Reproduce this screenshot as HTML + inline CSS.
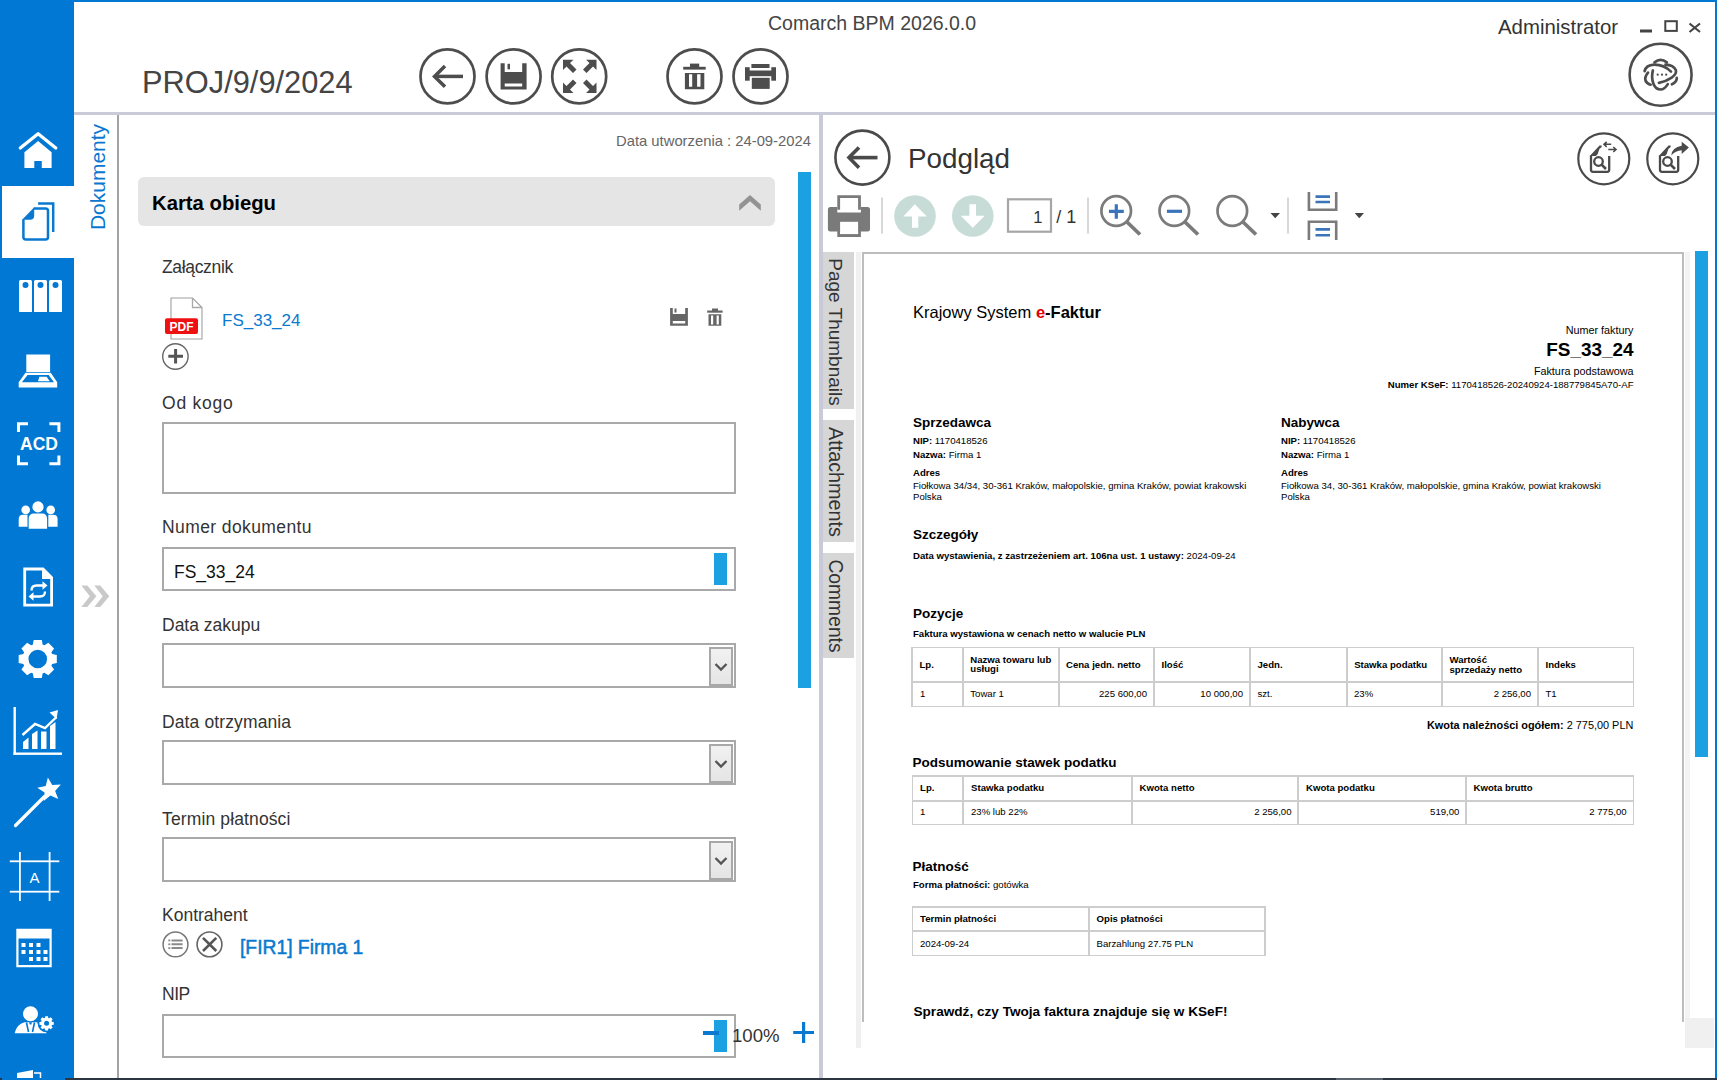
<!DOCTYPE html>
<html><head><meta charset="utf-8">
<style>
*{margin:0;padding:0;box-sizing:border-box}
html,body{width:1717px;height:1080px;overflow:hidden;background:#fff;font-family:"Liberation Sans",sans-serif;}
.a{position:absolute}
.t{position:absolute;white-space:nowrap;line-height:1}
svg{position:absolute;overflow:visible}
</style></head><body>
<!-- window frame -->
<div class="a" style="left:0;top:0;width:1717px;height:2px;background:#0078d4"></div>
<div class="a" style="left:1715px;top:0;width:2px;height:1080px;background:#0078d4"></div>
<div class="a" style="left:0;top:1078px;width:1717px;height:2px;background:#2b3640"></div>
<div class="a" style="left:1336px;top:1078px;width:47px;height:2px;background:#59636b"></div>
<!-- sidebar -->
<div class="a" style="left:2px;top:0;width:72px;height:1080px;background:#0078d4"></div><div class="a" style="left:0;top:0;width:2px;height:1078px;background:#0078d4"></div>
<div class="a" style="left:65px;top:1078px;width:9px;height:2px;background:#2b3640"></div>
<div class="a" style="left:2px;top:186px;width:72px;height:72px;background:#fff"></div>

<svg style="left:0;top:0" width="74" height="1078">
 <g fill="#fff">
  <!-- home -->
  <path d="M20.3 148 L38.1 133.8 L55.8 148" fill="none" stroke="#fff" stroke-width="3.3" stroke-linecap="round" stroke-linejoin="round"/>
  <path d="M24.4 152.2 L38.1 141 L51.6 152.2 V168 H41.8 V160.9 H34.3 V168 H24.4 Z"/>
  <!-- binders -->
  <path fill-rule="evenodd" d="M19 281.5 Q19 280 20.5 280 H30.5 Q32 280 32 281.5 V312 H19 Z M25.5 285 m-3 0 a3 3 0 1 0 6 0 a3 3 0 1 0 -6 0"/>
  <path fill-rule="evenodd" d="M34 281.5 Q34 280 35.5 280 H45.5 Q47 280 47 281.5 V312 H34 Z M40.5 285 m-3 0 a3 3 0 1 0 6 0 a3 3 0 1 0 -6 0"/>
  <path fill-rule="evenodd" d="M49 281.5 Q49 280 50.5 280 H60.5 Q62 280 62 281.5 V312 H49 Z M55.5 285 m-3 0 a3 3 0 1 0 6 0 a3 3 0 1 0 -6 0"/>
  <!-- laptop/scanner -->
  <rect x="26.3" y="354.5" width="23.8" height="17.5"/>
  <path fill-rule="evenodd" d="M25.5 372.8 H50.8 L57.2 382.3 V387.6 H18.7 V382.3 Z M27.6 375 L21.9 382.3 H54 L48.6 375 Z"/>
  <path d="M39.4 376.7 H46.6 L49.8 381.2 H38 Z"/>
  <!-- ACD -->
  <path d="M17 422.3 H28 V425.3 H20 V432 H17 Z M60.4 422.3 H49.4 V425.3 H57.4 V432 H60.4 Z M17 465.3 H28 V462.3 H20 V455.5 H17 Z M60.4 465.3 H49.4 V462.3 H57.4 V455.5 H60.4 Z"/>
 </g>
 <text x="39" y="450.3" fill="#fff" font-family="Liberation Sans" font-weight="bold" font-size="17.5" text-anchor="middle">ACD</text>
 <g fill="#fff">
  <!-- people -->
  <circle cx="38" cy="506.9" r="5.6"/>
  <path d="M28.7 528.8 V519 Q28.7 513.5 34 513.5 H42 Q47.1 513.5 47.1 519 V528.8 Z"/>
  <circle cx="25.7" cy="509.9" r="4.3"/>
  <circle cx="50.7" cy="509.9" r="4.3"/>
  <path d="M18.7 526.7 V519 Q18.7 514.7 23 514.7 H27.5 V526.7 Z"/>
  <path d="M57.6 526.7 V519 Q57.6 514.7 53.3 514.7 H48.3 V526.7 Z"/>
 </g>
 <!-- doc sync -->
 <g fill="none" stroke="#fff" stroke-width="2.8">
  <path d="M24.7 569 H43 L51.6 577.5 V605.2 H24.7 Z"/>
  <path d="M42.5 569 V577.5 H51.6" stroke-width="0" />
 </g>
 <path d="M42 568 L53 579 H42 Z" fill="#fff"/>
 <g fill="none" stroke="#fff" stroke-width="2.3">
  <path d="M31.5 590.5 Q31.5 585.5 36.5 585.5 H43"/>
  <path d="M45 591.5 Q45 596.5 40 596.5 H33"/>
 </g>
 <path d="M42.5 581.3 L47.5 585.5 L42.5 589.7 Z M33.5 592.3 L28.5 596.5 L33.5 600.7 Z" fill="#fff"/>
 <!-- gear -->
 <g fill="#fff" fill-rule="evenodd">
  <path d="M32.80 644.63 L33.70 639.93 L41.80 639.93 L42.70 644.63 L44.41 645.34 L48.37 642.65 L54.10 648.38 L51.41 652.34 L52.12 654.05 L56.82 654.95 L56.82 663.05 L52.12 663.95 L51.41 665.66 L54.10 669.62 L48.37 675.35 L44.41 672.66 L42.70 673.37 L41.80 678.07 L33.70 678.07 L32.80 673.37 L31.09 672.66 L27.13 675.35 L21.40 669.62 L24.09 665.66 L23.38 663.95 L18.68 663.05 L18.68 654.95 L23.38 654.05 L24.09 652.34 L21.40 648.38 L27.13 642.65 L31.09 645.34 Z M28.45 659 a9.3 9.3 0 1 0 18.6 0 a9.3 9.3 0 1 0 -18.6 0 Z"/>
 </g>
 <!-- chart -->
 <g fill="#fff">
  <rect x="13.5" y="707" width="2.4" height="48"/>
  <rect x="13.5" y="752.5" width="48.5" height="2.4"/>
  <path d="M23 742 L28.5 737.5 V748.9 H23 Z"/>
  <path d="M32 734 L37.5 730.5 V748.9 H32 Z"/>
  <path d="M41 731.5 H46.5 V748.9 H41 Z"/>
  <path d="M50 726 L55.5 722 V748.9 H50 Z"/>
 </g>
 <g fill="none" stroke="#fff" stroke-width="2.4"><path d="M22.5 735 L35 724 L45 728 L56.5 717"/></g>
 <path d="M49.5 712.5 L58 710 L56.5 719 Z" fill="#fff"/>
 <!-- wand -->
 <path d="M15.5 825.5 L44.5 796.5" stroke="#fff" stroke-width="3.2" stroke-linecap="round"/>
 <path fill="#fff" d="M47.86 777.62 L52.23 785.06 L60.83 784.52 L55.11 790.97 L58.28 798.99 L50.38 795.55 L43.73 801.04 L44.57 792.45 L37.29 787.83 L45.71 785.97 Z"/>
 <!-- frame A -->
 <g fill="#fff">
  <rect x="19" y="852" width="1.8" height="49"/>
  <rect x="48.7" y="852" width="1.8" height="49"/>
  <rect x="9.8" y="860.4" width="49.5" height="1.8"/>
  <rect x="9.8" y="890.8" width="49.5" height="1.8"/>
 </g>
 <text x="34.5" y="883" fill="#fff" font-family="Liberation Sans" font-size="15" text-anchor="middle">A</text>
 <!-- calendar -->
 <g fill="#fff">
  <path fill-rule="evenodd" d="M16.3 928.7 H51.7 V967.2 H16.3 Z M18.5 938.5 V965 H49.5 V938.5 Z"/>
  <rect x="21.5" y="943" width="4" height="4"/><rect x="29" y="943" width="4" height="4"/><rect x="36.5" y="943" width="4" height="4"/>
  <rect x="21.5" y="950" width="4" height="4"/><rect x="29" y="950" width="4" height="4"/><rect x="36.5" y="950" width="4" height="4"/><rect x="43.5" y="950" width="4" height="4"/>
  <rect x="29" y="957" width="4" height="4"/><rect x="36.5" y="957" width="4" height="4"/><rect x="43.5" y="957" width="4" height="4"/>
 </g>
 <!-- user gear -->
 <g fill="#fff">
  <circle cx="30.5" cy="1013.7" r="7.5"/>
  <path d="M14.6 1033.3 Q16.5 1024.5 24.5 1022.3 H36.5 Q44 1024 46.6 1033.3 Z"/>
 </g>
 <g stroke="#0078d4" stroke-width="1.6" fill="none"><path d="M26.5 1022.5 L28.5 1032 M34.5 1022.5 L32.5 1032"/></g>
 <path d="M29 1022.3 H32 L31.3 1024.5 H29.7 Z" fill="#0078d4"/>
 <circle cx="46.6" cy="1023.3" r="9" fill="#0078d4"/>
 <path fill="#fff" fill-rule="evenodd" d="M51.96 1021.66 L53.77 1021.91 L53.77 1024.69 L51.96 1024.94 L51.54 1025.93 L52.65 1027.38 L50.68 1029.35 L49.23 1028.24 L48.24 1028.66 L47.99 1030.47 L45.21 1030.47 L44.96 1028.66 L43.97 1028.24 L42.52 1029.35 L40.55 1027.38 L41.66 1025.93 L41.24 1024.94 L39.43 1024.69 L39.43 1021.91 L41.24 1021.66 L41.66 1020.67 L40.55 1019.22 L42.52 1017.25 L43.97 1018.36 L44.96 1017.94 L45.21 1016.13 L47.99 1016.13 L48.24 1017.94 L49.23 1018.36 L50.68 1017.25 L52.65 1019.22 L51.54 1020.67 Z M44.10 1023.3 a2.5 2.5 0 1 0 5.0 0 a2.5 2.5 0 1 0 -5.0 0 Z"/>
 <!-- partial bottom icon -->
 <path fill="#fff" d="M17 1073 L33 1070 V1078 H17 Z"/>
 <path fill="none" stroke="#fff" stroke-width="1.5" d="M34 1073 H40.5 V1078"/>
</svg>
<!-- selected docs icon -->
<svg style="left:0;top:0" width="74" height="260">
 <g fill="none" stroke="#0a78d0" stroke-width="2.5">
  <path d="M33.7 208.5 H45.5 Q48 208.5 48 211 V236.9 Q48 239.4 45.5 239.4 H25.9 Q23.4 239.4 23.4 236.9 V219.3"/>
  <path d="M38.1 203.6 H53.2 V232"/>
 </g>
 <path d="M22.1 219.8 L34.2 207.2 V215.5 Q34.2 219.8 30 219.8 Z" fill="#0a78d0"/>
</svg>
<!-- chevrons -->
<svg style="left:0;top:0" width="120" height="620">
 <g fill="#c9c9c9">
  <path d="M81.4 585.6 H87.3 L96.4 596.3 L87.3 607 H81.4 L89.8 596.3 Z"/>
  <path d="M94.3 585.6 H100.2 L109.3 596.3 L100.2 607 H94.3 L102.7 596.3 Z"/>
 </g>
</svg>


<!-- header -->
<div class="a" style="left:74px;top:112px;width:1641px;height:3px;background:#c9cbd9"></div>

<div class="t" style="left:142px;top:68.1px;font-size:30.8px;color:#444">PROJ/9/9/2024</div>
<div class="t" style="left:768px;top:13.5px;font-size:19.5px;color:#444">Comarch BPM 2026.0.0</div>
<div class="t" style="left:1498px;top:16.5px;font-size:20.4px;color:#333">Administrator</div>
<svg style="left:0;top:0" width="1717" height="112">
 <g fill="none" stroke="#4d4d4d" stroke-width="2.7">
  <circle cx="447.5" cy="76.4" r="27"/>
  <circle cx="513.6" cy="76.4" r="27"/>
  <circle cx="579.2" cy="76.4" r="27"/>
  <circle cx="694.5" cy="76.4" r="27"/>
  <circle cx="760.5" cy="76.4" r="27"/>
  <circle cx="1660.6" cy="74.7" r="31" stroke-width="2.6"/>
 </g>
 <!-- back arrow -->
 <g fill="none" stroke="#4d4d4d" stroke-width="3.5">
  <path d="M463 76.4 H435"/>
  <path d="M445 66 L434.5 76.4 L445 86.8"/>
 </g>
 <!-- save -->
 <path fill="#4d4d4d" fill-rule="evenodd" d="M500.6 63.2 H526.6 V89.4 H500.6 Z M504.7 63.2 V72 H522.2 V63.2 Z M504.7 83.6 V86.5 H522.2 V83.6 Z"/>
 <rect x="507.5" y="63.8" width="2.5" height="5.5" fill="#4d4d4d"/>
 <!-- expand -->
 <g fill="#4d4d4d">
  <path d="M563 59.7 H573.5 L570 63 L576.5 69.5 L573 73 L566.5 66.5 L563 70 Z"/>
  <path d="M596.5 59.7 V70 L593 66.5 L586.5 73 L583 69.5 L589.5 63 L586 59.7 Z"/>
  <path d="M563 92.9 V82.5 L566.5 86 L573 79.5 L576.5 83 L570 89.5 L573.5 92.9 Z"/>
  <path d="M596.5 92.9 H586 L589.5 89.5 L583 83 L586.5 79.5 L593 86 L596.5 82.5 Z"/>
 </g>
 <!-- trash -->
 <g fill="#4d4d4d">
  <rect x="690" y="63.6" width="9.2" height="3.4"/>
  <rect x="683.2" y="66.8" width="22.5" height="2.8"/>
  <path fill-rule="evenodd" d="M684.9 73 H704.3 V89.3 H684.9 Z M689 74.2 V86.8 H692.2 V74.2 Z M697.1 74.2 V86.8 H700.5 V74.2 Z"/>
 </g>
 <!-- printer -->
 <g fill="#4d4d4d">
  <rect x="751.4" y="64" width="18.1" height="4"/>
  <rect x="745" y="67.2" width="4.7" height="13.5"/>
  <rect x="771.3" y="67.2" width="4.7" height="13.5"/>
  <rect x="749" y="70.5" width="23" height="5.7"/>
  <rect x="751.8" y="77.8" width="17.9" height="11.1"/>
 </g>
 <!-- window controls -->
 <g fill="none" stroke="#444" stroke-width="2">
  <path d="M1640 31 H1652" stroke-width="3"/>
  <rect x="1665.3" y="21.2" width="11.5" height="9.7"/>
  <path d="M1689.5 23.5 L1700 32 M1700 23.5 L1689.5 32" stroke-width="2.2"/>
 </g>
 <!-- comarch logo -->
 <g fill="none" stroke="#4d4d4d" stroke-width="2.7" stroke-linecap="round">
  <path d="M1654.5 62.4 Q1660.6 57.5 1666.8 62.4"/>
  <path d="M1644.6 71.1 Q1646 65 1654.2 64.6 Q1664 64.5 1671 71.6"/>
  <path d="M1665.5 64.6 Q1673.5 65 1675.8 70 Q1677 74 1671.7 77.6 Q1666 81.5 1658.9 82.8"/>
  <path d="M1652.9 70.5 Q1651 77 1653.5 84.1 Q1656 89.5 1660.6 89.5 Q1664.5 89.5 1667.8 84.1"/>
  <path d="M1648 72.6 Q1644.5 77 1645.5 80.5 Q1646.5 83.5 1650.6 84.7"/>
  <path d="M1676.8 77.8 Q1677 82 1671.9 84.3"/>
 </g>
 <g fill="#4d4d4d"><circle cx="1657.7" cy="74.7" r="1.1"/><circle cx="1662" cy="74.7" r="1.1"/><circle cx="1666.2" cy="74.7" r="1.1"/></g>
</svg>


<!-- left panel -->
<div class="a" style="left:117px;top:115px;width:2px;height:963px;background:#a3a3a3"></div>
<div class="t" style="left:97px;top:176.5px;font-size:21px;color:#0a78d0;transform:translate(-50%,-50%) rotate(-90deg);transform-origin:center">Dokumenty</div>
<div class="t" style="left:616px;top:134.2px;font-size:14.8px;color:#666;">Data utworzenia : 24-09-2024</div>
<div class="a" style="left:138px;top:177px;width:637px;height:49px;border-radius:6px;background:#e5e5e5"></div>
<div class="t" style="left:152px;top:193.0px;font-size:20.3px;color:#000;font-weight:bold">Karta obiegu</div>
<svg style="left:0;top:0" width="800" height="300"><path d="M739.2 204.6 L750 195 L760.8 204.6 V210.8 L750 201.3 L739.2 210.8 Z" fill="#939393"/></svg>
<div class="t" style="left:162px;top:258.9px;font-size:17.5px;color:#333;letter-spacing:-0.34px">Załącznik</div>
<svg style="left:0;top:0" width="800" height="400">
 <path d="M171 298 H192.5 L202 307.5 V339 H171 Z" fill="#fff" stroke="#a0a0a0" stroke-width="1.1"/>
 <path d="M192.5 298 V307.5 H202" fill="none" stroke="#a8a8a8" stroke-width="1.3"/>
 <rect x="165" y="318.3" width="33" height="15.7" rx="2" fill="#ee1111"/>
 <text x="181.5" y="331" fill="#fff" font-family="Liberation Sans" font-weight="bold" font-size="12" text-anchor="middle">PDF</text>
 <circle cx="175.4" cy="356.5" r="12.7" fill="none" stroke="#666" stroke-width="1.4"/>
 <path d="M168.3 356.3 H183 M175.6 349 V363.6" stroke="#555" stroke-width="3"/>
 <g fill="#666">
  <path fill-rule="evenodd" d="M670.1 308 H687.9 V325.8 H670.1 Z M672.8 308 V314 H685.2 V308 Z M672.8 321 V323.5 H685.2 V321 Z"/>
  <rect x="674.5" y="308.5" width="2" height="4"/>
  <rect x="712" y="308.5" width="6" height="2.5"/>
  <rect x="707.2" y="310.5" width="15.4" height="2.2"/>
  <path fill-rule="evenodd" d="M708.5 314.3 H721.3 V325.8 H708.5 Z M711 315.5 V324.5 H713.2 V315.5 Z M716.6 315.5 V324.5 H718.8 V315.5 Z"/>
 </g>
</svg>
<div class="t" style="left:222px;top:311.5px;font-size:17px;color:#0a7ad0;">FS_33_24</div>
<div class="t" style="left:162px;top:395.1px;font-size:17.5px;color:#333;letter-spacing:0.78px">Od kogo</div>
<div class="a" style="left:162px;top:422px;width:574px;height:72px;border:2px solid #a9a9a9"></div>
<div class="t" style="left:162px;top:519.2px;font-size:17.5px;color:#333;letter-spacing:0.4px">Numer dokumentu</div>
<div class="a" style="left:162px;top:547px;width:574px;height:44px;border:2px solid #a9a9a9"></div>
<div class="t" style="left:174px;top:563.8px;font-size:17.5px;color:#111;">FS_33_24</div>
<div class="a" style="left:714px;top:553px;width:13px;height:31.5px;background:#1ba1e2"></div>
<div class="t" style="left:162px;top:617.2px;font-size:17.5px;color:#333;">Data zakupu</div>
<div class="a" style="left:162px;top:643px;width:574px;height:45px;border:2px solid #a9a9a9"></div>
<div class="a" style="left:709px;top:647.0px;width:24px;height:39.5px;background:linear-gradient(#f1f1f1,#e5e5e5);border:2px solid #a8a8a8;border-bottom:3px solid #a8a8a8"></div>
<svg style="left:0;top:0" width="740" height="1080"><path d="M715.5 664.0 L721 669.5 L726.5 664.0" fill="none" stroke="#555" stroke-width="2.3"/></svg>
<div class="t" style="left:162px;top:713.7px;font-size:17.5px;color:#333;letter-spacing:0.12px">Data otrzymania</div>
<div class="a" style="left:162px;top:740px;width:574px;height:45px;border:2px solid #a9a9a9"></div>
<div class="a" style="left:709px;top:744.0px;width:24px;height:39.5px;background:linear-gradient(#f1f1f1,#e5e5e5);border:2px solid #a8a8a8;border-bottom:3px solid #a8a8a8"></div>
<svg style="left:0;top:0" width="740" height="1080"><path d="M715.5 761.0 L721 766.5 L726.5 761.0" fill="none" stroke="#555" stroke-width="2.3"/></svg>
<div class="t" style="left:162px;top:810.8px;font-size:17.5px;color:#333;letter-spacing:0.13px">Termin płatności</div>
<div class="a" style="left:162px;top:837px;width:574px;height:45px;border:2px solid #a9a9a9"></div>
<div class="a" style="left:709px;top:841.0px;width:24px;height:39.5px;background:linear-gradient(#f1f1f1,#e5e5e5);border:2px solid #a8a8a8;border-bottom:3px solid #a8a8a8"></div>
<svg style="left:0;top:0" width="740" height="1080"><path d="M715.5 858.0 L721 863.5 L726.5 858.0" fill="none" stroke="#555" stroke-width="2.3"/></svg>
<div class="t" style="left:162px;top:907.4px;font-size:17.5px;color:#333;">Kontrahent</div>
<svg style="left:0;top:0" width="800" height="1080">
 <circle cx="175.5" cy="944.4" r="12.4" fill="none" stroke="#777" stroke-width="1.5"/>
 <g stroke="#8a8a8a" stroke-width="2"><path d="M171.5 940.4 H182.6 M171.5 944.3 H182.6 M171.5 948.1 H182.6"/></g>
 <g fill="#8a8a8a"><rect x="168.3" y="939.5" width="2" height="1.8"/><rect x="168.3" y="943.4" width="2" height="1.8"/><rect x="168.3" y="947.2" width="2" height="1.8"/></g>
 <circle cx="209.5" cy="944.4" r="12.4" fill="none" stroke="#666" stroke-width="1.6"/>
 <path d="M203 937.8 L216.3 951 M216.3 937.8 L203 951" stroke="#555" stroke-width="2.6"/>
</svg>
<div class="t" style="left:240px;top:938.1px;font-size:19.3px;color:#0a7ad0;-webkit-text-stroke:0.5px #0a7ad0">[FIR1] Firma 1</div>
<div class="t" style="left:162px;top:986.1px;font-size:17.5px;color:#333;letter-spacing:-0.5px">NIP</div>
<div class="a" style="left:162px;top:1014px;width:574px;height:44px;border:2px solid #a9a9a9"></div>
<div class="a" style="left:714px;top:1020px;width:13px;height:31.5px;background:#1ba1e2"></div>
<div class="a" style="left:703px;top:1031.3px;width:16.2px;height:3.3px;background:#0a78d0"></div>
<div class="t" style="left:732px;top:1026.7px;font-size:18.6px;color:#333;">100%</div>
<svg style="left:0;top:0" width="830" height="1080"><path d="M793.2 1032.5 H814 M803.6 1022 V1043" stroke="#0a78d0" stroke-width="3.2"/></svg>
<div class="a" style="left:798px;top:172px;width:13px;height:516px;background:#1ba1e2"></div>


<!-- divider -->
<div class="a" style="left:819px;top:115px;width:4px;height:963px;background:#c9cad9"></div>
<div class="t" style="left:908px;top:144.9px;font-size:27.8px;color:#333;">Podgląd</div>
<svg style="left:0;top:0" width="1717" height="260">
 <g fill="none" stroke="#4a4a4a" stroke-width="2.6">
  <circle cx="862.4" cy="157.6" r="27"/>
  <circle cx="1603.8" cy="158.8" r="25.5" stroke-width="2.2"/>
  <circle cx="1672.8" cy="158.8" r="25.5" stroke-width="2.2"/>
 </g>
 <g fill="none" stroke="#4a4a4a" stroke-width="3.6">
  <path d="M877.5 157.6 H849"/>
  <path d="M859 147.5 L849 157.6 L859 167.7"/>
 </g>
 <!-- printer gray -->
 <g fill="#7a7a7a" fill-rule="evenodd">
  <path d="M837.3 195.2 H860.9 V209.8 H858.1 V198 H840.1 V209.8 H837.3 Z"/>
  <path d="M830.4 207 H837.3 V212.5 H860.9 V207 H867.5 Q870 207 870 209.5 V228.9 Q870 231.4 867.5 231.4 H830.4 Q827.9 231.4 827.9 228.9 V209.5 Q827.9 207 830.4 207 Z"/>
  <path d="M837.3 218.8 H860.9 V236.9 H837.3 Z M840.1 221.8 V234.1 H858.1 V221.8 Z"/>
 </g>
 <rect x="840.1" y="221.8" width="18" height="12.3" fill="#fff"/>
 <g fill="#d8d8d8">
  <rect x="881" y="197.6" width="2" height="36"/>
  <rect x="1087" y="197.6" width="2" height="36"/>
  <rect x="1287" y="197.6" width="2" height="36"/>
 </g>
 <!-- up/down -->
 <circle cx="915" cy="216" r="20.8" fill="#c7dcd6"/>
 <circle cx="972.8" cy="216" r="20.8" fill="#c7dcd6"/>
 <path fill="#fff" d="M914.8 204.2 L926.9 216.4 H918.3 V227.8 H912 V216.4 H903.3 Z"/>
 <path fill="#fff" d="M972.8 227.8 L960.7 215.7 H969.4 V204.2 H976 V215.7 H984.8 Z"/>
 <!-- page box -->
 <rect x="1008" y="199.3" width="43" height="32.4" fill="none" stroke="#a6a6a6" stroke-width="2.2"/>
 <text x="1042.5" y="222.8" font-family="Liberation Sans" font-size="16.5" fill="#333" text-anchor="end">1</text>
 <text x="1056.3" y="222.8" font-family="Liberation Sans" font-size="18" fill="#333">/ 1</text>
 <!-- zoom in / out / zoom -->
 <g fill="none" stroke="#7b7b7b" stroke-width="2.7">
  <circle cx="1116.2" cy="211" r="14.8"/>
  <path d="M1127 222 L1140 234.5" stroke-width="3.8"/>
  <circle cx="1174.3" cy="211" r="14.8"/>
  <path d="M1185 222 L1198 234.5" stroke-width="3.8"/>
  <circle cx="1232.3" cy="211" r="14.8"/>
  <path d="M1243 222 L1256 234.5" stroke-width="3.8"/>
 </g>
 <g stroke="#3b74b9" stroke-width="3.2">
  <path d="M1108.9 211.3 H1123.8 M1116.3 204.3 V218.8"/>
  <path d="M1166.9 211.3 H1182"/>
 </g>
 <path d="M1270.5 213 H1280 L1275.2 218.2 Z" fill="#444"/>
 <path d="M1354.7 213 H1364 L1359.3 218.2 Z" fill="#444"/>
 <!-- page layout icon -->
 <g fill="none" stroke="#7b7b7b" stroke-width="2.6">
  <path d="M1308.9 192 V209.8 H1336.2 V192"/>
  <path d="M1308.9 240 V221.8 H1336.2 V240"/>
 </g>
 <g stroke="#3b74b9" stroke-width="2.6">
  <path d="M1315.5 196.6 H1330 M1315.5 202 H1330"/>
  <path d="M1315.5 229.4 H1330 M1315.5 235.2 H1330"/>
 </g>
 <!-- right circle icons -->
 <g transform="translate(0 0)">
  <path d="M1591 155.5 V169.8 Q1591 171.8 1593 171.8 H1607.2 Q1609.2 171.8 1609.2 169.8 V156" fill="none" stroke="#4a4a4a" stroke-width="2.3"/>
  <path d="M1589.8 156 L1599.5 145.4 H1601.8 L1601.5 147.2 Q1599 148 1598.5 151.5 Q1598 155 1596 156 Z" fill="#4a4a4a"/>
  <circle cx="1598.5" cy="161.5" r="4.3" fill="none" stroke="#4a4a4a" stroke-width="2.3"/>
  <path d="M1601.6 164.6 L1606 169" stroke="#4a4a4a" stroke-width="2.7"/>
 </g>
 <g transform="translate(69 0)">
  <path d="M1591 155.5 V169.8 Q1591 171.8 1593 171.8 H1607.2 Q1609.2 171.8 1609.2 169.8 V156" fill="none" stroke="#4a4a4a" stroke-width="2.3"/>
  <path d="M1589.8 156 L1599.5 145.4 H1601.8 L1601.5 147.2 Q1599 148 1598.5 151.5 Q1598 155 1596 156 Z" fill="#4a4a4a"/>
  <circle cx="1598.5" cy="161.5" r="4.3" fill="none" stroke="#4a4a4a" stroke-width="2.3"/>
  <path d="M1601.6 164.6 L1606 169" stroke="#4a4a4a" stroke-width="2.7"/>
 </g>
 <g fill="none" stroke="#4a4a4a" stroke-width="1.6">
  <path d="M1604.2 144.3 H1611.2 M1606.7 141.8 L1604 144.3 L1606.7 146.8"/>
  <path d="M1608.3 149.5 H1615.8 M1613.3 147 L1616 149.5 L1613.3 152"/>
 </g>
 <path d="M1671.3 155.5 Q1672 147.2 1681.7 145.8 V141.7 L1688.9 147.6 L1681.7 154 V150.2 Q1675.5 150.5 1671.3 155.5 Z" fill="#4a4a4a"/>
</svg>
<div class="a" style="left:823px;top:252px;width:31px;height:157px;background:#d6d6d6"></div>
<div class="a" style="left:823px;top:420px;width:31px;height:121.5px;background:#d6d6d6"></div>
<div class="a" style="left:823px;top:552.5px;width:31px;height:105px;background:#d6d6d6"></div>
<div class="t" style="left:834.5px;top:331.75px;font-size:19px;color:#333;transform:translate(-50%,-50%) rotate(90deg)">Page Thumbnails</div>
<div class="t" style="left:834.5px;top:481.75px;font-size:19.8px;color:#333;transform:translate(-50%,-50%) rotate(90deg)">Attachments</div>
<div class="t" style="left:834.5px;top:606.25px;font-size:19.3px;color:#333;transform:translate(-50%,-50%) rotate(90deg)">Comments</div>
<div class="a" style="left:856px;top:252px;width:5px;height:796px;background:#f0f0f0"></div>
<div class="a" style="left:862px;top:252px;width:822px;height:770px;border-left:2px solid #bdbdbd;border-top:2px solid #bdbdbd;border-right:2px solid #bdbdbd;background:#fff"></div>
<div class="a" style="left:1685px;top:252px;width:4.5px;height:766px;background:#f3f3f3"></div>
<div class="a" style="left:1685px;top:1018px;width:29px;height:29.5px;background:#f0f0f0"></div>
<div class="a" style="left:1695px;top:251px;width:13px;height:506px;background:#1ba1e2"></div>


<!--DOC-->
<div class="t" style="left:913px;top:304.13px;font-size:16.5px;color:#000">Krajowy System <b style="color:#e10000">e</b><b>-Faktur</b></div>
<div class="t" style="right:83.50px;top:324.96px;font-size:10.8px;font-weight:normal;color:#000">Numer faktury</div>
<div class="t" style="right:83.50px;top:340.90px;font-size:18.9px;font-weight:bold;color:#000">FS_33_24</div>
<div class="t" style="right:83.50px;top:365.76px;font-size:10.8px;font-weight:normal;color:#000">Faktura podstawowa</div>
<div class="t" style="right:83.50px;top:379.77px;font-size:9.6px;color:#000"><b>Numer KSeF:</b> 1170418526-20240924-188779845A70-AF</div>
<div class="t" style="left:913px;top:416.37px;font-size:13.5px;font-weight:bold;color:#000">Sprzedawca</div>
<div class="t" style="left:913px;top:436.47px;font-size:9.6px;font-weight:normal;color:#000"><b>NIP:</b> 1170418526</div>
<div class="t" style="left:913px;top:449.87px;font-size:9.6px;font-weight:normal;color:#000"><b>Nazwa:</b> Firma 1</div>
<div class="t" style="left:913px;top:467.57px;font-size:9.6px;font-weight:bold;color:#000">Adres</div>
<div class="t" style="left:913px;top:480.67px;font-size:9.6px;font-weight:normal;color:#000">Fiołkowa 34/34, 30-361 Kraków, małopolskie, gmina Kraków, powiat krakowski</div>
<div class="t" style="left:913px;top:492.37px;font-size:9.6px;font-weight:normal;color:#000">Polska</div>
<div class="t" style="left:1281px;top:416.37px;font-size:13.5px;font-weight:bold;color:#000">Nabywca</div>
<div class="t" style="left:1281px;top:436.47px;font-size:9.6px;font-weight:normal;color:#000"><b>NIP:</b> 1170418526</div>
<div class="t" style="left:1281px;top:449.87px;font-size:9.6px;font-weight:normal;color:#000"><b>Nazwa:</b> Firma 1</div>
<div class="t" style="left:1281px;top:467.57px;font-size:9.6px;font-weight:bold;color:#000">Adres</div>
<div class="t" style="left:1281px;top:480.67px;font-size:9.6px;font-weight:normal;color:#000">Fiołkowa 34, 30-361 Kraków, małopolskie, gmina Kraków, powiat krakowski</div>
<div class="t" style="left:1281px;top:492.37px;font-size:9.6px;font-weight:normal;color:#000">Polska</div>
<div class="t" style="left:913px;top:528.37px;font-size:13.5px;font-weight:bold;color:#000">Szczegóły</div>
<div class="t" style="left:913px;top:551.47px;font-size:9.6px;font-weight:normal;color:#000"><b>Data wystawienia, z zastrzeżeniem art. 106na ust. 1 ustawy:</b> 2024-09-24</div>
<div class="t" style="left:913px;top:606.97px;font-size:13.5px;font-weight:bold;color:#000">Pozycje</div>
<div class="t" style="left:913px;top:628.67px;font-size:9.6px;font-weight:bold;color:#000">Faktura wystawiona w cenach netto w walucie PLN</div>
<div class="a" style="left:911.25px;top:646.55px;width:1.5px;height:60.60px;background:#cdcdcd"></div>
<div class="a" style="left:961.50px;top:646.55px;width:2px;height:60.60px;background:#cdcdcd"></div>
<div class="a" style="left:1057.50px;top:646.55px;width:2px;height:60.60px;background:#cdcdcd"></div>
<div class="a" style="left:1153.00px;top:646.55px;width:2px;height:60.60px;background:#cdcdcd"></div>
<div class="a" style="left:1249.00px;top:646.55px;width:2px;height:60.60px;background:#cdcdcd"></div>
<div class="a" style="left:1345.70px;top:646.55px;width:2px;height:60.60px;background:#cdcdcd"></div>
<div class="a" style="left:1441.00px;top:646.55px;width:2px;height:60.60px;background:#cdcdcd"></div>
<div class="a" style="left:1537.00px;top:646.55px;width:2px;height:60.60px;background:#cdcdcd"></div>
<div class="a" style="left:1632.95px;top:646.55px;width:1.5px;height:60.60px;background:#cdcdcd"></div>
<div class="a" style="left:911.25px;top:646.55px;width:723.20px;height:1.5px;background:#cdcdcd"></div>
<div class="a" style="left:911.25px;top:680.70px;width:723.20px;height:2px;background:#cdcdcd"></div>
<div class="a" style="left:911.25px;top:705.65px;width:723.20px;height:1.5px;background:#cdcdcd"></div>
<div class="t" style="left:919.5px;top:659.87px;font-size:9.6px;font-weight:bold;color:#000">Lp.</div>
<div class="t" style="left:1066.0px;top:659.87px;font-size:9.6px;font-weight:bold;color:#000">Cena jedn. netto</div>
<div class="t" style="left:1161.5px;top:659.87px;font-size:9.6px;font-weight:bold;color:#000">Ilość</div>
<div class="t" style="left:1257.5px;top:659.87px;font-size:9.6px;font-weight:bold;color:#000">Jedn.</div>
<div class="t" style="left:1354.2px;top:659.87px;font-size:9.6px;font-weight:bold;color:#000">Stawka podatku</div>
<div class="t" style="left:1545.5px;top:659.87px;font-size:9.6px;font-weight:bold;color:#000">Indeks</div>
<div class="t" style="left:970.3px;top:654.57px;font-size:9.6px;font-weight:bold;color:#000">Nazwa towaru lub</div>
<div class="t" style="left:970.3px;top:664.47px;font-size:9.6px;font-weight:bold;color:#000">usługi</div>
<div class="t" style="left:1449.5px;top:655.17px;font-size:9.6px;font-weight:bold;color:#000">Wartość</div>
<div class="t" style="left:1449.5px;top:665.27px;font-size:9.6px;font-weight:bold;color:#000">sprzedaży netto</div>
<div class="t" style="left:920px;top:689.47px;font-size:9.6px;font-weight:normal;color:#000">1</div>
<div class="t" style="left:970.3px;top:689.47px;font-size:9.6px;font-weight:normal;color:#000">Towar 1</div>
<div class="t" style="right:570.00px;top:689.47px;font-size:9.6px;font-weight:normal;color:#000">225 600,00</div>
<div class="t" style="right:474.00px;top:689.47px;font-size:9.6px;font-weight:normal;color:#000">10 000,00</div>
<div class="t" style="left:1257.5px;top:689.47px;font-size:9.6px;font-weight:normal;color:#000">szt.</div>
<div class="t" style="left:1354px;top:689.47px;font-size:9.6px;font-weight:normal;color:#000">23%</div>
<div class="t" style="right:186.00px;top:689.47px;font-size:9.6px;font-weight:normal;color:#000">2 256,00</div>
<div class="t" style="left:1545.5px;top:689.47px;font-size:9.6px;font-weight:normal;color:#000">T1</div>
<div class="t" style="right:83.70px;top:719.67px;font-size:10.9px;color:#000"><b>Kwota należności ogółem:</b> 2 775,00 PLN</div>
<div class="t" style="left:912.5px;top:755.97px;font-size:13.5px;font-weight:bold;color:#000">Podsumowanie stawek podatku</div>
<div class="a" style="left:911.65px;top:775.35px;width:1.5px;height:50.10px;background:#cdcdcd"></div>
<div class="a" style="left:962.40px;top:775.35px;width:2px;height:50.10px;background:#cdcdcd"></div>
<div class="a" style="left:1130.90px;top:775.35px;width:2px;height:50.10px;background:#cdcdcd"></div>
<div class="a" style="left:1297.30px;top:775.35px;width:2px;height:50.10px;background:#cdcdcd"></div>
<div class="a" style="left:1464.80px;top:775.35px;width:2px;height:50.10px;background:#cdcdcd"></div>
<div class="a" style="left:1632.95px;top:775.35px;width:1.5px;height:50.10px;background:#cdcdcd"></div>
<div class="a" style="left:911.65px;top:775.35px;width:722.80px;height:1.5px;background:#cdcdcd"></div>
<div class="a" style="left:911.65px;top:799.60px;width:722.80px;height:2px;background:#cdcdcd"></div>
<div class="a" style="left:911.65px;top:823.95px;width:722.80px;height:1.5px;background:#cdcdcd"></div>
<div class="t" style="left:920.1px;top:782.87px;font-size:9.6px;font-weight:bold;color:#000">Lp.</div>
<div class="t" style="left:971.1px;top:782.87px;font-size:9.6px;font-weight:bold;color:#000">Stawka podatku</div>
<div class="t" style="left:1139.6000000000001px;top:782.87px;font-size:9.6px;font-weight:bold;color:#000">Kwota netto</div>
<div class="t" style="left:1306.0px;top:782.87px;font-size:9.6px;font-weight:bold;color:#000">Kwota podatku</div>
<div class="t" style="left:1473.5px;top:782.87px;font-size:9.6px;font-weight:bold;color:#000">Kwota brutto</div>
<div class="t" style="left:920px;top:807.47px;font-size:9.6px;font-weight:normal;color:#000">1</div>
<div class="t" style="left:971px;top:807.47px;font-size:9.6px;font-weight:normal;color:#000">23% lub 22%</div>
<div class="t" style="right:425.50px;top:807.47px;font-size:9.6px;font-weight:normal;color:#000">2 256,00</div>
<div class="t" style="right:257.60px;top:807.47px;font-size:9.6px;font-weight:normal;color:#000">519,00</div>
<div class="t" style="right:90.40px;top:807.47px;font-size:9.6px;font-weight:normal;color:#000">2 775,00</div>
<div class="t" style="left:912.5px;top:860.17px;font-size:13.5px;font-weight:bold;color:#000">Płatność</div>
<div class="t" style="left:913px;top:880.47px;font-size:9.6px;font-weight:normal;color:#000"><b>Forma płatności:</b> gotówka</div>
<div class="a" style="left:911.65px;top:906.15px;width:1.5px;height:50.30px;background:#cdcdcd"></div>
<div class="a" style="left:1088.40px;top:906.15px;width:2px;height:50.30px;background:#cdcdcd"></div>
<div class="a" style="left:1264.35px;top:906.15px;width:1.5px;height:50.30px;background:#cdcdcd"></div>
<div class="a" style="left:911.65px;top:906.15px;width:354.20px;height:1.5px;background:#cdcdcd"></div>
<div class="a" style="left:911.65px;top:929.50px;width:354.20px;height:2px;background:#cdcdcd"></div>
<div class="a" style="left:911.65px;top:954.95px;width:354.20px;height:1.5px;background:#cdcdcd"></div>
<div class="t" style="left:920px;top:913.87px;font-size:9.6px;font-weight:bold;color:#000">Termin płatności</div>
<div class="t" style="left:1096.6px;top:913.87px;font-size:9.6px;font-weight:bold;color:#000">Opis płatności</div>
<div class="t" style="left:920px;top:938.77px;font-size:9.6px;font-weight:normal;color:#000">2024-09-24</div>
<div class="t" style="left:1096.6px;top:938.77px;font-size:9.6px;font-weight:normal;color:#000">Barzahlung 27.75 PLN</div>
<div class="t" style="left:913.5px;top:1004.69px;font-size:13.6px;font-weight:bold;color:#000">Sprawdź, czy Twoja faktura znajduje się w KSeF!</div>
<!--/DOC-->
</body></html>
